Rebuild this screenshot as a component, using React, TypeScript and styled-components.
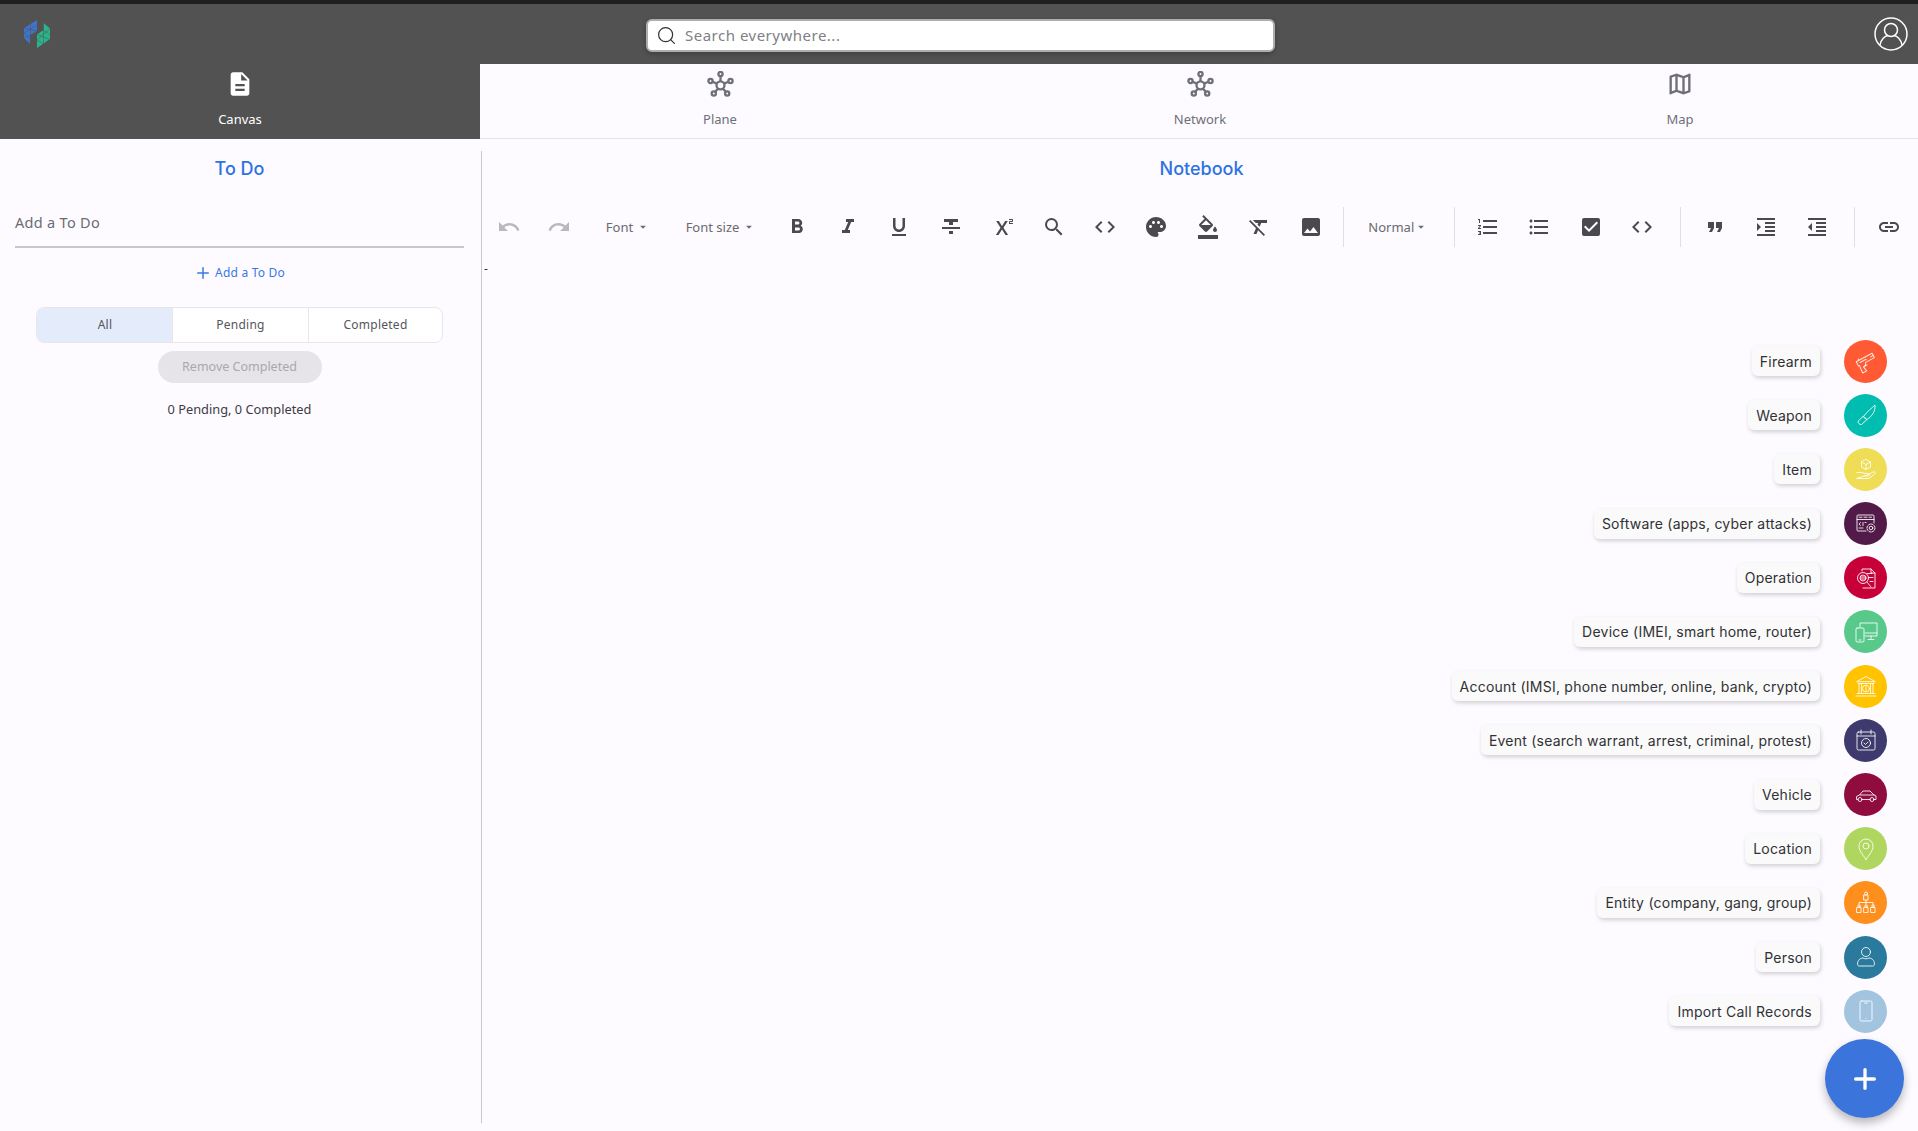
import React from "react";
import styled, { createGlobalStyle } from "styled-components";
import { Search, Plus } from "lucide-react";
import {
	MdUndo,
	MdRedo,
	MdFormatBold,
	MdFormatItalic,
	MdFormatUnderlined,
	MdFormatStrikethrough,
	MdSuperscript,
	MdSearch,
	MdCode,
	MdPalette,
	MdFormatColorFill,
	MdFormatClear,
	MdImage,
	MdFormatListNumbered,
	MdFormatListBulleted,
	MdCheckBox,
	MdFormatQuote,
	MdFormatIndentIncrease,
	MdFormatIndentDecrease,
	MdLink,
	MdDescription,
	MdOutlineMap,
	MdArrowDropDown,
} from "react-icons/md";

const GlobalStyle = createGlobalStyle`
	html, body {
		margin: 0;
		padding: 0;
		background: #fdfbff;
	}
	* {
		box-sizing: border-box;
	}
`;

const Page = styled.div`
	position: relative;
	width: 1918px;
	height: 1131px;
	overflow: hidden;
	background: #fdfbff;
	display: flex;
	flex-direction: column;
	font-family: "Noto Sans", sans-serif;
`;

const Header = styled.header`
	height: 64px;
	flex: none;
	border-top: 4px solid #1f1f1f;
	background: #525252;
	display: grid;
	grid-template-columns: 646px 629px 1fr;
	padding-top: 15px;
`;

const LogoBox = styled.div`
	padding: 1px 0 0 24px;
`;

const SearchBox = styled.div`
	height: 33px;
	display: flex;
	align-items: center;
	gap: 8px;
	padding-left: 8px;
	background: #ffffff;
	border: 2px solid #aeaeae;
	border-radius: 6px;
	box-shadow: 0 2px 5px rgba(0, 0, 0, 0.25);
	color: #808085;
	font-size: 15px;
	line-height: 27px;
	letter-spacing: 0.5px;
`;

const Avatar = styled.div`
	display: flex;
	justify-content: flex-end;
	padding: 0 10px 0 0;
	margin-top: -2px;
`;

const Tabs = styled.nav`
	height: 75px;
	flex: none;
	display: grid;
	grid-template-columns: repeat(4, 480px);
	border-bottom: 1px solid #e5e3ea;
`;

const Tab = styled.div<{ $active?: boolean }>`
	display: flex;
	flex-direction: column;
	align-items: center;
	padding-top: 7px;
	background: ${(p) => (p.$active ? "#525252" : "transparent")};
	color: ${(p) => (p.$active ? "#ffffff" : "#6f6f78")};
	font-size: 13px;
	margin-bottom: ${(p) => (p.$active ? "-1px" : "0")};
`;

const TabIcon = styled.div`
	height: 26px;
	margin-bottom: 13px;
	display: flex;
	align-items: center;
	font-size: 28px;
`;

const Content = styled.div`
	flex: 1;
	display: grid;
	grid-template-columns: 482px 1fr;
	min-height: 0;
`;

const TodoPanel = styled.aside`
	height: 972px;
	margin-top: 12px;
	border-right: 1px solid #c9c8cc;
	padding: 0 17px 0 15px;
	display: flex;
	flex-direction: column;
	align-items: center;
`;

const PanelTitle = styled.h2`
	margin: 0;
	font-family: Inter, sans-serif;
	font-size: 18px;
	line-height: 36px;
	font-weight: 500;
	color: #2f72e2;
`;

const TodoInput = styled.div`
	align-self: stretch;
	height: 43px;
	margin-top: 18px;
	padding-top: 7px;
	border-bottom: 2px solid #c8c6cc;
	color: #6b6b70;
	font-size: 14.5px;
	letter-spacing: 0.3px;
`;

const AddLink = styled.div`
	margin-top: 16px;
	display: flex;
	align-items: center;
	gap: 3px;
	color: #3a78e4;
	font-size: 12px;
	line-height: 18px;
	letter-spacing: 0.2px;
`;

const Segments = styled.div`
	width: 407px;
	height: 36px;
	margin-top: 24.5px;
	display: grid;
	grid-template-columns: 135px 136px 1fr;
	border: 1px solid #e7e6ea;
	border-radius: 8px;
	overflow: hidden;
	background: #ffffff;
`;

const Segment = styled.div<{ $active?: boolean }>`
	display: flex;
	align-items: center;
	justify-content: center;
	background: ${(p) => (p.$active ? "#e4ebfb" : "transparent")};
	border-left: 1px solid ${(p) => (p.$active ? "transparent" : "#e7e6ea")};
	color: #55555c;
	font-size: 12px;
	letter-spacing: 0.25px;
`;

const RemoveButton = styled.div`
	width: 164px;
	height: 32px;
	margin-top: 8px;
	display: flex;
	align-items: center;
	justify-content: center;
	border-radius: 16px;
	background: #e6e4e8;
	color: #a9a8ac;
	font-size: 12.5px;
`;

const Counter = styled.div`
	margin-top: 16px;
	color: #3c3c42;
	font-size: 12.8px;
	line-height: 20px;
`;

const Notebook = styled.main`
	margin-top: 12px;
	padding-left: 3px;
	display: flex;
	flex-direction: column;
	align-items: center;
`;

const Toolbar = styled.div`
	align-self: stretch;
	height: 40px;
	margin-top: 19.5px;
	display: flex;
	align-items: center;
	color: #4a4a4e;
`;

const ToolButton = styled.div<{ $muted?: boolean; $w?: number }>`
	width: ${(p) => p.$w ?? 51.4}px;
	flex: none;
	display: flex;
	align-items: center;
	justify-content: center;
	font-size: 24px;
	color: ${(p) => (p.$muted ? "#b9b9bc" : "#4a4a4e")};
`;

const Select = styled.div<{ $w: number; $gap?: number }>`
	width: ${(p) => p.$w}px;
	flex: none;
	display: flex;
	align-items: center;
	justify-content: center;
	gap: ${(p) => p.$gap ?? 3}px;
	color: #6a6a70;
	font-size: 13px;
	white-space: nowrap;
`;

const Sep = styled.div`
	width: 1px;
	height: 40px;
	flex: none;
	background: #e0dfe5;
`;

const EditorBody = styled.div`
	align-self: stretch;
	margin-left: -3px;
	padding: 14.5px 0 0 2px;
	color: #333333;
	font-size: 12px;
	line-height: 16px;
`;

const Dial = styled.div`
	position: absolute;
	right: 31px;
	top: 339px;
	display: flex;
	flex-direction: column;
	align-items: flex-end;
	gap: 10.2px;
`;

const DialRow = styled.div`
	height: 44px;
	display: flex;
	align-items: center;
	gap: 24px;
`;

const DialLabel = styled.div`
	height: 30px;
	padding: 0 8px;
	display: flex;
	align-items: center;
	border-radius: 6px;
	background: #fafafa;
	box-shadow: 1px 2px 4px rgba(0, 0, 0, 0.18);
	color: #313135;
	font-family: Inter, sans-serif;
	font-size: 14px;
	letter-spacing: 0.23px;
	white-space: nowrap;
`;

const DialCircle = styled.div<{ $bg: string }>`
	width: 43px;
	height: 43px;
	flex: none;
	display: flex;
	align-items: center;
	justify-content: center;
	border-radius: 50%;
	background: ${(p) => p.$bg};
`;

const Fab = styled.div`
	position: absolute;
	left: 1825px;
	top: 1039px;
	width: 79px;
	height: 79px;
	display: flex;
	align-items: center;
	justify-content: center;
	border-radius: 50%;
	background: #3b74db;
	box-shadow: 0 5px 10px rgba(0, 0, 0, 0.28);
	color: #ffffff;
`;

const Logo = () => (
	<svg width="27" height="29" viewBox="0 0 27 29">
		<polygon points="13,0 0,8 0,18 6,24 6,15 13,11" fill="#3f74cc" />
		<polygon points="19.5,3 26,8.5 26,19 13,28 13,14.500 19.500,10" fill="#2bb38c" />
		<g stroke="#525252" strokeWidth="0.5" fill="none">
			<path d="M6.5 4v11M0 8l13 3M0 13l13-8M0 13l6 5M0 18l6-3" />
			<path d="M19.5 3v7M19.500 10v14M13 14.500l13 5M13 20l13-11.500M13 20l6.500 4M19.500 10l6.500 5" />
		</g>
	</svg>
);

const UserIcon = () => (
	<svg width="34" height="34" viewBox="0 0 34 34" fill="none" stroke="#fff" strokeWidth="1.5">
		<circle cx="17" cy="17" r="16" />
		<circle cx="17" cy="13" r="6.5" />
		<path d="M6 28c1-6 5-9 8-9.5M28 28c-1-6-5-9-8-9.5" />
	</svg>
);

const HubIcon = () => (
	<svg width="27" height="26" viewBox="0 0 27 26" fill="none" stroke="#6f6f78" strokeWidth="2.3">
		<circle cx="13.500" cy="14.300" r="4" />
		<circle cx="13.500" cy="3" r="2.100" />
		<circle cx="3.500" cy="10" r="2.100" />
		<circle cx="23.500" cy="10" r="2.100" />
		<circle cx="6.800" cy="22.500" r="2.100" />
		<circle cx="20.200" cy="22.500" r="2.100" />
		<path d="M13.500 5.200v5M5.600 10.800l4.300 1.800M21.400 10.800l-4.300 1.800M8.200 20.800l3-3.300M18.800 20.800l-3-3.300" />
	</svg>
);

const dialIcon = (children: React.ReactNode) => (
	<svg width="26" height="26" viewBox="0 0 26 26" fill="none" stroke="rgba(255,255,255,0.85)" strokeWidth="1" strokeLinejoin="round" strokeLinecap="round">
		{children}
	</svg>
);

const dialItems: { label: string; bg: string; icon: React.ReactNode }[] = [
	{
		label: "Firearm",
		bg: "#ff5a33",
		icon: dialIcon(
			<g transform="rotate(-28 13 13)">
				<path d="M4 9h18v5H12l-1 2c-.500 1-2 1-3 1l1 5H4.500L5 14H4z" />
				<path d="M7 9v-1.500M19 11.500h3M9 17h3M7 11.500h7" />
			</g>,
		),
	},
	{
		label: "Weapon",
		bg: "#00bdaf",
		icon: dialIcon(
			<>
				<path d="M10.500 14.500C14 9.500 19 6 22 3c.500 6-2.500 11-8 14.500z" />
				<path d="M10.500 14.500l3.500 3-5.500 5c-1.500.500-4-1.500-3.500-3z" />
			</>,
		),
	},
	{
		label: "Item",
		bg: "#eedd55",
		icon: dialIcon(
			<>
				<path d="M13 3.500l4.500 2.500v5L13 13.500 8.500 11V6zM8.500 6l4.500 2.500L17.500 6M13 8.500v5" />
				<path d="M4 16.500h4.500c1.500 0 2.500 1 4 1h3c1.300 0 1.300 2.500 0 2.500h-3.500M15.500 18.500l4.500-2.500c2-1 3 1 1.500 2L16 22.500H4z" />
			</>,
		),
	},
	{
		label: "Software (apps, cyber attacks)",
		bg: "#521a49",
		icon: dialIcon(
			<>
				<path d="M13 20H5a1 1 0 0 1-1-1V5a1 1 0 0 1 1-1h15a1 1 0 0 1 1 1v7M4 8.500h17" />
				<path d="M6 6.200h3M11 6.200h3M16 6.200h2.500M7.500 11.500l-1.500 1.500 1.500 1.500M10 11.500v3M13 11.500h-1M6 17h4" />
				<circle cx="18" cy="17" r="1.800" />
				<circle cx="18" cy="17" r="4" strokeDasharray="2 1" />
			</>,
		),
	},
	{
		label: "Operation",
		bg: "#c70039",
		icon: dialIcon(
			<>
				<path d="M9 6V4h9l4 4v15H10" />
				<path d="M18 4v4h4M14 8.500h5M16 12.500h4M17 16.500h3" />
				<circle cx="10" cy="13" r="5.500" />
				<circle cx="10" cy="13" r="3" />
				<path d="M7.500 12h5M7.500 14h5M14 17l4 5" />
			</>,
		),
	},
	{
		label: "Device (IMEI, smart home, router)",
		bg: "#58c98a",
		icon: dialIcon(
			<>
				<path d="M7 8V4h17v13H12M18 17v3M15 20.500h6M12 14h12" />
				<rect x="3" y="9" width="8" height="14" rx="1.200" />
				<path d="M6 21h2" />
			</>,
		),
	},
	{
		label: "Account (IMSI, phone number, online, bank, crypto)",
		bg: "#ffc300",
		icon: dialIcon(
			<>
				<path d="M4 8.500L13 3.500l9 5zM5 10.500h16M6 10.500v10M20 10.500v10M4 20.500h18M3 23h20" />
				<circle cx="13" cy="15.500" r="3.500" />
				<path d="M13 13v5M8.500 11v9M17.500 11v9" />
			</>,
		),
	},
	{
		label: "Event (search warrant, arrest, criminal, protest)",
		bg: "#3e3a6d",
		icon: dialIcon(
			<>
				<rect x="4" y="5" width="18" height="18" rx="1.500" />
				<path d="M4 9h18M8 3v4M18 3v4" />
				<circle cx="13" cy="16" r="4.500" />
				<path d="M11 16l1.500 1.500L15 15" />
			</>,
		),
	},
	{
		label: "Vehicle",
		bg: "#900c3f",
		icon: dialIcon(
			<>
				<path d="M5 17.500H3.500v-3l3-1.500 3.500-4h7l4 4 2 1v3.500H21M9 17.500h8M7 13h14" />
				<circle cx="7" cy="17.500" r="2" />
				<circle cx="19" cy="17.500" r="2" />
			</>,
		),
	},
	{
		label: "Location",
		bg: "#afd65f",
		icon: dialIcon(
			<>
				<path d="M13 23.500c-4-6-7-9-7-13.500a7 7 0 0 1 14 0c0 4.500-3 7.500-7 13.500z" />
				<circle cx="13" cy="10" r="3" />
			</>,
		),
	},
	{
		label: "Entity (company, gang, group)",
		bg: "#ff8f1c",
		icon: dialIcon(
			<>
				<circle cx="13" cy="3.500" r="1.500" />
				<rect x="11" y="5" width="4" height="5" />
				<circle cx="6" cy="16" r="1.200" />
				<circle cx="13" cy="16" r="1.200" />
				<circle cx="20" cy="16" r="1.200" />
				<rect x="4" y="17.500" width="4" height="5" />
				<rect x="11" y="17.500" width="4" height="5" />
				<rect x="18" y="17.500" width="4" height="5" />
				<path d="M13 10v4M6 14.500V12.500h14v2" />
			</>,
		),
	},
	{
		label: "Person",
		bg: "#2a7a9e",
		icon: dialIcon(
			<>
				<circle cx="13" cy="8" r="4.500" />
				<path d="M6 22c-1 0-1.500-1-1.500-2 0-4 3-6 5.500-6 2 1 4 1 6 0 2.500 0 5.500 2 5.500 6 0 1-.500 2-1.500 2z" />
			</>,
		),
	},
	{
		label: "Import Call Records",
		bg: "#a2c4de",
		icon: dialIcon(
			<>
				<rect x="7" y="3" width="12" height="20" rx="1.500" />
				<path d="M11.500 5h3M13 20.500h.01" />
			</>,
		),
	},
];

const App = () => {
	return (
		<Page>
			<GlobalStyle />
			<Header>
				<LogoBox>
					<Logo />
				</LogoBox>
				<SearchBox>
					<Search size={21} strokeWidth={1.4} color="#333" />
					Search everywhere...
				</SearchBox>
				<Avatar>
					<UserIcon />
				</Avatar>
			</Header>
			<Tabs>
				<Tab $active>
					<TabIcon>
						<MdDescription />
					</TabIcon>
					Canvas
				</Tab>
				<Tab>
					<TabIcon>
						<HubIcon />
					</TabIcon>
					Plane
				</Tab>
				<Tab>
					<TabIcon>
						<HubIcon />
					</TabIcon>
					Network
				</Tab>
				<Tab>
					<TabIcon>
						<MdOutlineMap />
					</TabIcon>
					Map
				</Tab>
			</Tabs>
			<Content>
				<TodoPanel>
					<PanelTitle>To Do</PanelTitle>
					<TodoInput>Add a To Do</TodoInput>
					<AddLink>
						<Plus size={18} strokeWidth={2} />
						Add a To Do
					</AddLink>
					<Segments>
						<Segment $active>All</Segment>
						<Segment>Pending</Segment>
						<Segment>Completed</Segment>
					</Segments>
					<RemoveButton>Remove Completed</RemoveButton>
					<Counter>0 Pending, 0 Completed</Counter>
				</TodoPanel>
				<Notebook>
					<PanelTitle>Notebook</PanelTitle>
					<Toolbar>
						<ToolButton $muted $w={48}>
							<MdUndo />
						</ToolButton>
						<ToolButton $muted $w={52}>
							<MdRedo />
						</ToolButton>
						<Select $w={86}>
							Font
							<MdArrowDropDown size={14} />
						</Select>
						<Select $w={100}>
							Font size
							<MdArrowDropDown size={14} />
						</Select>
						<ToolButton>
							<MdFormatBold />
						</ToolButton>
						<ToolButton>
							<MdFormatItalic />
						</ToolButton>
						<ToolButton>
							<MdFormatUnderlined />
						</ToolButton>
						<ToolButton>
							<MdFormatStrikethrough />
						</ToolButton>
						<ToolButton>
							<MdSuperscript />
						</ToolButton>
						<ToolButton>
							<MdSearch />
						</ToolButton>
						<ToolButton>
							<MdCode />
						</ToolButton>
						<ToolButton>
							<MdPalette />
						</ToolButton>
						<ToolButton>
							<MdFormatColorFill />
						</ToolButton>
						<ToolButton>
							<MdFormatClear />
						</ToolButton>
						<ToolButton>
							<MdImage />
						</ToolButton>
						<ToolButton $w={7} />
						<Sep />
						<Select $w={108} $gap={0}>
							Normal
							<MdArrowDropDown size={14} />
						</Select>
						<ToolButton $w={2} />
						<Sep />
						<ToolButton $w={7} />
						<ToolButton>
							<MdFormatListNumbered />
						</ToolButton>
						<ToolButton>
							<MdFormatListBulleted />
						</ToolButton>
						<ToolButton>
							<MdCheckBox />
						</ToolButton>
						<ToolButton>
							<MdCode />
						</ToolButton>
						<ToolButton $w={12} />
						<Sep />
						<ToolButton $w={8} />
						<ToolButton>
							<MdFormatQuote />
						</ToolButton>
						<ToolButton>
							<MdFormatIndentIncrease />
						</ToolButton>
						<ToolButton>
							<MdFormatIndentDecrease />
						</ToolButton>
						<ToolButton $w={11} />
						<Sep />
						<ToolButton $w={5} />
						<ToolButton $w={58}>
							<MdLink />
						</ToolButton>
					</Toolbar>
					<EditorBody>-</EditorBody>
				</Notebook>
			</Content>
			<Dial>
				{dialItems.map((item) => (
					<DialRow key={item.label}>
						<DialLabel>{item.label}</DialLabel>
						<DialCircle $bg={item.bg}>{item.icon}</DialCircle>
					</DialRow>
				))}
			</Dial>
			<Fab>
				<Plus size={32} strokeWidth={2.5} />
			</Fab>
		</Page>
	);
};

export default App;
